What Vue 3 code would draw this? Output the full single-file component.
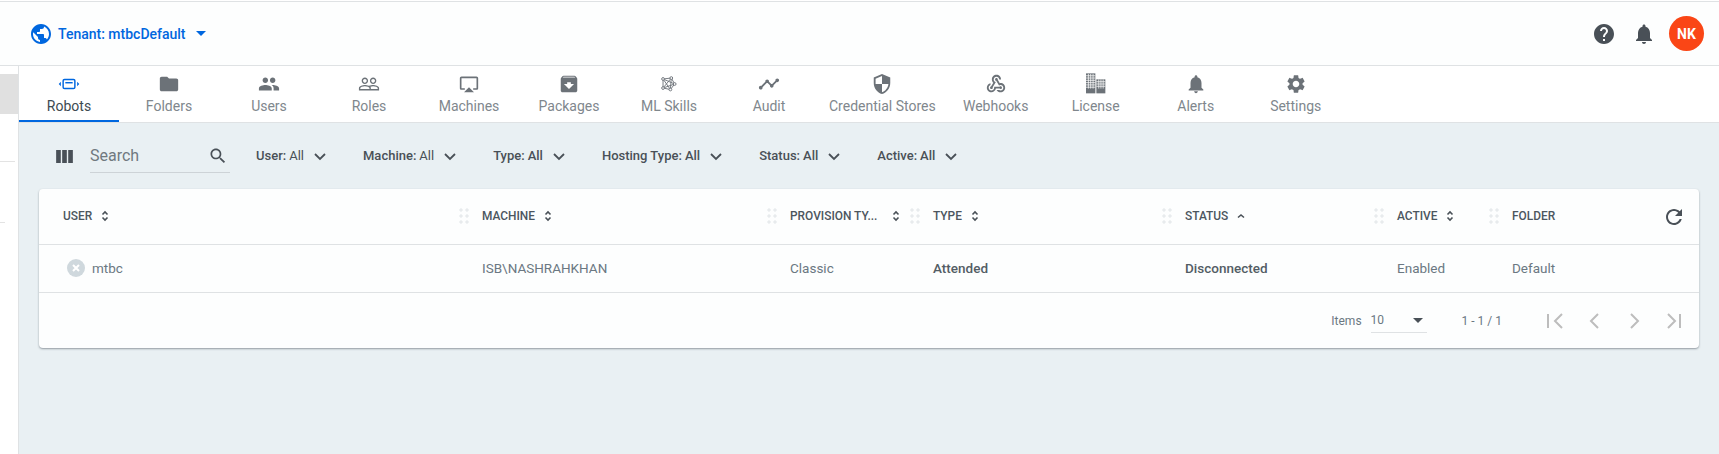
<script setup>
const tabs = [
  { label: "Robots", icon: "robot", active: true },
  { label: "Folders", icon: "folder" },
  { label: "Users", icon: "users" },
  { label: "Roles", icon: "roles" },
  { label: "Machines", icon: "machine", size: 20 },
  { label: "Packages", icon: "package" },
  { label: "ML Skills", icon: "ml" },
  { label: "Audit", icon: "audit" },
  { label: "Credential Stores", icon: "shield" },
  { label: "Webhooks", icon: "webhook" },
  { label: "License", icon: "license" },
  { label: "Alerts", icon: "bell" },
  { label: "Settings", icon: "gear" },
];

const filters = [
  { name: "User:", value: "All" },
  { name: "Machine:", value: "All" },
  { name: "Type:", value: "All", bold: true },
  { name: "Hosting Type:", value: "All", bold: true },
  { name: "Status:", value: "All", bold: true },
  { name: "Active:", value: "All", bold: true },
];

const columns = [
  { label: "USER", width: 422, sort: "both", first: true },
  { label: "MACHINE", width: 308, sort: "both" },
  { label: "PROVISION TY...", width: 143, sort: "both", wide: true },
  { label: "TYPE", width: 252, sort: "both" },
  { label: "STATUS", width: 212, sort: "up" },
  { label: "ACTIVE", width: 115, sort: "both" },
  { label: "FOLDER", width: 170 },
];

const cells = [
  { text: "Classic", width: 143 },
  { text: "Attended", width: 252, strong: true },
  { text: "Disconnected", width: 212, strong: true },
  { text: "Enabled", width: 115 },
  { text: "Default", width: 170 },
];

const paths = {
  folder: "M10 4H4c-1.1 0-2 .9-2 2v12c0 1.1.9 2 2 2h16c1.1 0 2-.9 2-2V8c0-1.1-.9-2-2-2h-8l-2-2z",
  users: "M16 11c1.66 0 2.99-1.34 2.99-3S17.66 5 16 5s-3 1.34-3 3 1.34 3 3 3zm-8 0c1.66 0 2.99-1.34 2.99-3S9.66 5 8 5 5 6.34 5 8s1.34 3 3 3zm0 2c-2.33 0-7 1.17-7 3.5V19h14v-2.5c0-2.33-4.67-3.5-7-3.5zm8 0c-.29 0-.62.02-.97.05 1.16.84 1.97 1.97 1.97 3.45V19h6v-2.5c0-2.33-4.67-3.5-7-3.5z",
  roles: "M16.5 13c-1.2 0-3.07.34-4.5 1-1.43-.67-3.3-1-4.5-1C5.33 13 1 14.08 1 16.25V19h22v-2.75c0-2.17-4.33-3.25-6.5-3.25zm-4 4.5h-10v-1.25c0-.54 2.56-1.75 5-1.75s5 1.21 5 1.75v1.25zm9 0H14v-1.25c0-.46-.2-.86-.52-1.22.88-.3 1.96-.53 3.02-.53 2.44 0 5 1.21 5 1.75v1.25zM7.5 12c1.93 0 3.5-1.57 3.5-3.5S9.43 5 7.5 5 4 6.57 4 8.5 5.57 12 7.5 12zm0-5.5c1.1 0 2 .9 2 2s-.9 2-2 2-2-.9-2-2 .9-2 2-2zm9 5.5c1.93 0 3.5-1.57 3.5-3.5S18.43 5 16.5 5 13 6.57 13 8.5s1.57 3.5 3.5 3.5zm0-5.5c1.1 0 2 .9 2 2s-.9 2-2 2-2-.9-2-2 .9-2 2-2z",
  machine: "M6 22h12l-6-6-6 6zM21 3H3c-1.1 0-2 .9-2 2v12c0 1.1.9 2 2 2h4v-2H3V5h18v12h-4v2h4c1.1 0 2-.9 2-2V5c0-1.1-.9-2-2-2z",
  package: "M20.54 5.23l-1.39-1.68C18.88 3.21 18.47 3 18 3H6c-.47 0-.88.21-1.16.55L3.46 5.23C3.17 5.57 3 6.02 3 6.5V19c0 1.1.9 2 2 2h14c1.1 0 2-.9 2-2V6.5c0-.48-.17-.93-.46-1.27zM12 17.5L6.5 12H10v-2h4v2h3.5L12 17.5zM5.12 5l.81-1h12l.94 1H5.12z",
  audit: "M23 8c0 1.1-.9 2-2 2-.18 0-.35-.02-.51-.07l-3.56 3.55c.05.16.07.34.07.52 0 1.1-.9 2-2 2s-2-.9-2-2c0-.18.02-.36.07-.52l-2.55-2.55c-.16.05-.34.07-.52.07s-.36-.02-.52-.07l-4.55 4.56c.05.16.07.33.07.51 0 1.1-.9 2-2 2s-2-.9-2-2 .9-2 2-2c.18 0 .35.02.51.07l4.56-4.55C8.02 9.36 8 9.18 8 9c0-1.1.9-2 2-2s2 .9 2 2c0 .18-.02.36-.07.52l2.55 2.55c.16-.05.34-.07.52-.07s.36.02.52.07l3.55-3.56C19.02 8.35 19 8.18 19 8c0-1.1.9-2 2-2s2 .9 2 2z",
  shield: "M12 1L3 5v6c0 5.55 3.84 10.74 9 12 5.16-1.26 9-6.45 9-12V5l-9-4zm0 10.99h7c-.53 4.12-3.28 7.79-7 8.94V12H5V6.3l7-3.11v8.8z",
  webhook: "M10 15h5.88c.27-.31.67-.5 1.12-.5.83 0 1.5.67 1.5 1.5s-.67 1.5-1.5 1.5c-.44 0-.84-.19-1.12-.5H11.9c-.46 2.28-2.48 4-4.9 4-2.76 0-5-2.24-5-5 0-2.42 1.72-4.44 4-4.9v2.07c-1.16.41-2 1.53-2 2.83 0 1.65 1.35 3 3 3s3-1.35 3-3v-2zm2.5-11c1.65 0 3 1.35 3 3h2c0-2.76-2.24-5-5-5s-5 2.24-5 5c0 1.43.6 2.71 1.57 3.62l-2.35 3.9c-.68.14-1.22.75-1.22 1.48 0 .83.67 1.5 1.5 1.5s1.5-.67 1.5-1.5c0-.16-.02-.31-.07-.45l3.38-5.63C10.49 9.61 9.5 8.42 9.5 7c0-1.65 1.35-3 3-3zm4.5 9c-.64 0-1.23.2-1.72.54l-3.05-5.07C11.53 8.35 11 7.74 11 7c0-.83.67-1.5 1.5-1.5S14 6.17 14 7c0 .15-.02.29-.06.43l2.19 3.65c.28-.05.57-.08.87-.08 2.76 0 5 2.24 5 5s-2.24 5-5 5c-1.85 0-3.47-1.01-4.33-2.5h2.67c.48.32 1.05.5 1.66.5 1.65 0 3-1.35 3-3s-1.35-3-3-3z",
  bell: "M12 22c1.1 0 2-.9 2-2h-4c0 1.1.89 2 2 2zm6-6v-5c0-3.07-1.64-5.64-4.5-6.32V4c0-.83-.67-1.5-1.5-1.5s-1.5.67-1.5 1.5v.68C7.63 5.36 6 7.92 6 11v5l-2 2v1h16v-1l-2-2z",
  gear: "M19.14 12.94c.04-.3.06-.61.06-.94 0-.32-.02-.64-.07-.94l2.03-1.58c.18-.14.23-.41.12-.61l-1.92-3.32c-.12-.22-.37-.29-.59-.22l-2.39.96c-.5-.38-1.03-.7-1.62-.94l-.36-2.54c-.04-.24-.24-.41-.48-.41h-3.84c-.24 0-.43.17-.47.41l-.36 2.54c-.59.24-1.13.57-1.62.94l-2.39-.96c-.22-.08-.47 0-.59.22L2.74 8.87c-.12.21-.08.47.12.61l2.03 1.58c-.05.3-.09.63-.09.94s.02.64.07.94l-2.03 1.58c-.18.14-.23.41-.12.61l1.92 3.32c.12.22.37.29.59.22l2.39-.96c.5.38 1.03.7 1.62.94l.36 2.54c.05.24.24.41.48.41h3.84c.24 0 .44-.17.47-.41l.36-2.54c.59-.24 1.13-.56 1.62-.94l2.39.96c.22.08.47 0 .59-.22l1.92-3.32c.12-.22.07-.47-.12-.61l-2.01-1.58zM12 15.6c-1.98 0-3.6-1.62-3.6-3.6s1.62-3.6 3.6-3.6 3.6 1.62 3.6 3.6-1.62 3.6-3.6 3.6z",
};
</script>

<template>
  <div class="page">
    <header class="topbar">
      <div class="tenant">
        <svg class="globe" viewBox="0 0 24 24" width="24" height="24">
          <path d="M12 2C6.48 2 2 6.48 2 12s4.48 10 10 10 10-4.48 10-10S17.52 2 12 2zm-1 17.93c-3.95-.49-7-3.85-7-7.93 0-.62.08-1.21.21-1.79L9 15v1c0 1.1.9 2 2 2v1.93zm6.9-2.54c-.26-.81-1-1.39-1.9-1.39h-1v-3c0-.55-.45-1-1-1H8v-2h2c.55 0 1-.45 1-1V7h2c1.1 0 2-.9 2-2v-.41c2.93 1.19 5 4.06 5 7.41 0 2.08-.8 3.97-2.1 5.39z" />
        </svg>
        <span class="tenant-name">Tenant: mtbcDefault</span>
        <span class="caret"></span>
      </div>
      <div class="top-actions">
        <svg viewBox="0 0 24 24" width="24" height="24" fill="#495057">
          <path d="M12 2C6.48 2 2 6.48 2 12s4.48 10 10 10 10-4.48 10-10S17.52 2 12 2zm1 17h-2v-2h2v2zm2.07-7.75l-.9.92C13.45 12.9 13 13.5 13 15h-2v-.5c0-1.1.45-2.1 1.17-2.83l1.24-1.26c.37-.36.59-.86.59-1.41 0-1.1-.9-2-2-2s-2 .9-2 2H8c0-2.21 1.79-4 4-4s4 1.79 4 4c0 .88-.36 1.68-.93 2.25z" />
        </svg>
        <svg class="top-bell" viewBox="0 0 24 24" width="24" height="24" fill="#495057">
          <path :d="paths.bell" />
        </svg>
        <div class="avatar">NK</div>
      </div>
    </header>

    <div class="body">
      <aside class="side">
        <div class="side-item"></div>
        <div class="side-line first"></div>
        <div class="side-line"></div>
      </aside>

      <main class="main">
        <nav class="tabs">
          <div v-for="t in tabs" :key="t.label" class="tab" :class="{ active: t.active }">
            <svg class="tab-icon" viewBox="0 0 24 24" :width="t.size || 22" height="22">
              <template v-if="t.icon === 'robot'">
                <rect x="5.6" y="7" width="12.8" height="10" rx="1.5" fill="none" stroke="#0067df" stroke-width="1.6" />
                <path d="M8 10.6h8" stroke="#0067df" stroke-width="1.6" fill="none" />
                <path d="M3.1 9.5.8 12l2.3 2.5zM20.9 9.5 23.2 12l-2.3 2.5z" fill="#0067df" />
              </template>
              <template v-else-if="t.icon === 'ml'">
                <path d="M5.5 6.5l9-1 3.7 6.5-4.7 6-8-1.6zM5.5 6.5l8 11.5M14.5 5.5l-9 10.9M5.5 6.5 18.2 12M5.5 16.4 18.2 12M14.5 5.5 13.5 18" fill="none" stroke="#6c7278" stroke-width="1" />
                <g fill="#fff" stroke="#6c7278" stroke-width="1">
                  <circle cx="5.5" cy="6.5" r="1.5" />
                  <circle cx="14.5" cy="5.5" r="1.5" />
                  <circle cx="18.2" cy="12" r="1.5" />
                  <circle cx="13.5" cy="18" r="1.5" />
                  <circle cx="5.5" cy="16.4" r="1.5" />
                </g>
              </template>
              <template v-else-if="t.icon === 'license'">
                <rect x="1.1" y="0.4" width="10.2" height="21.8" fill="#6c7278" />
                <rect x="12.4" y="6.9" width="9.8" height="15.3" fill="#6c7278" />
                <path d="M1.1 3h10.2M1.1 5.5h10.200M1.1 8h10.200M1.1 10.5h10.200M1.1 13h10.200M1.1 15.5h10.200M3.700 1v16M6.200 1v16M8.800 1v16M12.400 9.500h9.800M12.400 12h9.800M12.400 14.500h9.800M15 7v10M17.400 7v10M19.800 7v10" stroke="#fff" stroke-width=".8" fill="none" />
              </template>
              <path v-else :d="paths[t.icon]" fill="#6c7278" />
            </svg>
            <span class="tab-label">{{ t.label }}</span>
          </div>
        </nav>

        <section class="content">
          <div class="toolbar">
            <svg class="columns-icon" viewBox="0 0 18 14" width="17" height="13" fill="#495057">
              <path d="M0 0h5v14H0zM6.5 0h5v14h-5zM13 0h5v14h-5z" />
            </svg>
            <div class="search">
              <span class="search-text">Search</span>
              <svg viewBox="0 0 24 24" width="20" height="20" fill="#495057">
                <path d="M15.5 14h-.79l-.28-.27C15.41 12.59 16 11.11 16 9.5 16 5.91 13.09 3 9.5 3S3 5.91 3 9.5 5.91 16 9.5 16c1.61 0 3.09-.59 4.23-1.57l.27.28v.79l5 4.99L20.49 19l-4.99-5zm-6 0C7.01 14 5 11.99 5 9.5S7.01 5 9.5 5 14 7.01 14 9.5 11.99 14 9.5 14z" />
              </svg>
            </div>
            <div class="filters">
              <div v-for="f in filters" :key="f.name" class="filter">
                <span class="filter-name">{{ f.name }}</span>
                <span class="filter-value" :class="{ bold: f.bold }">{{ f.value }}</span>
                <svg viewBox="0 0 14 9" width="14" height="9" fill="none" stroke="#495057" stroke-width="1.8">
                  <path d="M2 2l5 5 5-5" />
                </svg>
              </div>
            </div>
          </div>

          <div class="card">
            <div class="row head">
              <div v-for="c in columns" :key="c.label" class="col" :class="{ first: c.first }" :style="{ width: c.width + 'px' }">
                <span class="grip" v-if="!c.first"></span>
                <span class="col-label">{{ c.label }}</span>
                <svg v-if="c.sort" class="sort" :class="{ far: c.wide }" viewBox="0 0 10 14" width="10" height="14" fill="none" stroke="#495057" stroke-width="1.6">
                  <path v-if="c.sort === 'both'" d="M2.5 5.500 5 3l2.500 2.500M2.500 8.500 5 11l2.500-2.500" />
                  <path v-else d="M2 8.500 5 6l3 2.500" />
                </svg>
              </div>
              <svg class="refresh" viewBox="0 0 24 24" width="24" height="24" fill="#495057">
                <path d="M17.65 6.35C16.2 4.9 14.21 4 12 4c-4.42 0-7.99 3.58-7.99 8s3.57 8 7.99 8c3.73 0 6.84-2.55 7.73-6h-2.08c-.82 2.33-3.04 4-5.65 4-3.31 0-6-2.69-6-6s2.69-6 6-6c1.66 0 3.14.69 4.22 1.78L13 11h7V4l-2.35 2.35z" />
              </svg>
            </div>

            <div class="row data">
              <div class="cell user">
                <svg viewBox="0 0 18 18" width="18" height="18">
                  <circle cx="9" cy="9" r="9" fill="#cfd8dd" />
                  <path d="M6 6l6 6M12 6l-6 6" stroke="#fff" stroke-width="2" />
                </svg>
                <span>mtbc</span>
              </div>
              <div class="cell machine">ISB\NASHRAHKHAN</div>
              <div v-for="c in cells" :key="c.text" class="cell" :class="{ strong: c.strong }" :style="{ width: c.width + 'px' }">{{ c.text }}</div>
            </div>

            <div class="pager">
              <span class="items">Items</span>
              <div class="page-size">
                <span>10</span>
                <span class="size-caret"></span>
              </div>
              <span class="range">1 - 1 / 1</span>
              <svg class="pager-icons" viewBox="0 0 134 24" width="134" height="24" fill="none" stroke="#bdbdbd" stroke-width="2">
                <path d="M1 5v14M15 5l-7 7 7 7" />
                <path d="M51 5l-7 7 7 7" />
                <path d="M84 5l7 7-7 7" />
                <path d="M121 5l7 7-7 7M133 5v14" />
              </svg>
            </div>
          </div>
        </section>
      </main>
    </div>
  </div>
</template>

<style>
html,
body {
  margin: 0;
  background: #fff;
}
</style>

<style scoped>
.page {
  width: 1719px;
  height: 454px;
  overflow: hidden;
  font-family: Roboto, "Liberation Sans", sans-serif;
  color: #526069;
  display: flex;
  flex-direction: column;
}
.topbar {
  box-sizing: border-box;
  height: 65px;
  margin-top: 1px;
  border-top: 1px solid #dfe2e4;
  border-bottom: 1px solid #dfe2e4;
  display: flex;
  align-items: center;
  justify-content: space-between;
  padding: 0 15px 0 29px;
  background: #fdfefe;
}
.tenant {
  display: flex;
  align-items: center;
  color: #0067df;
}
.globe {
  fill: #0067df;
}
.tenant-name {
  margin-left: 5px;
  font-size: 14px;
  font-weight: 500;
}
.caret {
  margin-left: 10px;
  border-left: 5px solid transparent;
  border-right: 5px solid transparent;
  border-top: 5px solid #0067df;
}
.top-actions {
  display: flex;
  align-items: center;
}
.top-bell {
  margin-left: 16px;
}
.avatar {
  margin-left: 13px;
  width: 35px;
  height: 35px;
  border-radius: 50%;
  background: #fa4616;
  color: #fff;
  font-size: 14px;
  font-weight: 700;
  display: flex;
  align-items: center;
  justify-content: center;
}
.body {
  flex: 1;
  display: flex;
  min-height: 0;
}
.side {
  box-sizing: border-box;
  flex: none;
  width: 19px;
  border-right: 1px solid #dfe2e4;
  padding-top: 8px;
  background: #fff;
}
.side-item {
  height: 40px;
  background: #e0e0e0;
}
.side-line {
  width: 5px;
  height: 1px;
  background: #e3e3e3;
  margin-top: 60px;
}
.side-line.first {
  width: 15px;
  margin-top: 47px;
}
.main {
  flex: 1;
  display: flex;
  flex-direction: column;
  min-width: 0;
}
.tabs {
  box-sizing: border-box;
  height: 57px;
  display: flex;
  border-bottom: 1px solid #dfe2e4;
  background: #fff;
}
.tab {
  box-sizing: border-box;
  min-width: 100px;
  height: 56px;
  display: flex;
  flex-direction: column;
  align-items: center;
  padding: 7px 10px 0;
  white-space: nowrap;
  color: #80878d;
}
.tab.active {
  color: #3d4a52;
  border-bottom: 2px solid #0067df;
}
.tab-icon {
  flex: none;
}
.tab-label {
  margin-top: 2px;
  font-size: 14px;
  line-height: 18px;
}
.content {
  flex: 1;
  background: #e9f0f3;
  padding: 0 20px;
}
.toolbar {
  height: 66px;
  display: flex;
  align-items: center;
  padding-left: 17px;
}
.columns-icon {
  flex: none;
}
.search {
  box-sizing: border-box;
  margin-left: 17px;
  width: 140px;
  height: 34px;
  display: flex;
  align-items: center;
  justify-content: space-between;
  border-bottom: 1px solid #cdd3d7;
  padding-right: 2px;
}
.search-text {
  font-size: 16px;
  color: #70797f;
}
.filters {
  display: flex;
  align-items: center;
  gap: 36px;
  margin-left: 26px;
}
.filter {
  display: flex;
  align-items: center;
  font-size: 13px;
  color: #495057;
  white-space: nowrap;
}
.filter-name {
  font-weight: 500;
  padding-bottom: 2px;
}
.filter-value {
  margin-left: 3px;
  margin-right: 9px;
  padding-bottom: 2px;
}
.filter-value.bold {
  font-weight: 500;
}
.card {
  background: #fdfefe;
  border-radius: 4px;
  box-shadow: 0 1px 2px rgba(60, 70, 80, 0.5);
}
.row {
  display: flex;
  position: relative;
}
.head {
  box-sizing: border-box;
  height: 56px;
  padding-bottom: 1px;
  align-items: center;
  border-bottom: 1px solid #dfe2e4;
}
.col {
  box-sizing: border-box;
  display: flex;
  align-items: center;
  padding-left: 21px;
  position: relative;
  flex: none;
  white-space: nowrap;
}
.col.first {
  padding-left: 24px;
}
.grip {
  position: absolute;
  left: -2px;
  top: 50%;
  margin-top: -8px;
  width: 10px;
  height: 16px;
  background-image: radial-gradient(circle, #e8ebed 1.5px, transparent 1.7px);
  background-size: 6px 6px;
  background-position: -1px -1px;
}
.col-label {
  font-size: 11.9px;
  font-weight: 500;
  color: #4c565e;
}
.sort {
  margin-left: 8px;
}
.sort.far {
  margin-left: 14px;
}
.refresh {
  position: absolute;
  right: 13px;
  top: 16px;
}
.data {
  box-sizing: border-box;
  height: 48px;
  padding-bottom: 2px;
  align-items: center;
  border-bottom: 1px solid #dfe2e4;
}
.cell {
  box-sizing: border-box;
  padding-left: 21px;
  font-size: 13.5px;
  color: #6b7882;
  flex: none;
  white-space: nowrap;
}
.cell.strong {
  color: #535d65;
  font-weight: 500;
}
.cell.user {
  width: 422px;
  padding-left: 28px;
  display: flex;
  align-items: center;
  gap: 7px;
}
.cell.machine {
  width: 308px;
}
.pager {
  height: 55px;
  display: flex;
  align-items: center;
  justify-content: flex-end;
  padding-right: 18px;
  font-size: 12px;
  color: #6b7882;
}
.page-size {
  box-sizing: border-box;
  margin-left: 9px;
  width: 56px;
  height: 24px;
  display: flex;
  align-items: center;
  justify-content: space-between;
  border-bottom: 1px solid #dfe2e4;
  padding-right: 4px;
}
.size-caret {
  border-left: 5px solid transparent;
  border-right: 5px solid transparent;
  border-top: 5px solid #495057;
}
.range {
  margin-left: 35px;
}
.pager-icons {
  margin-left: 45px;
}
</style>
